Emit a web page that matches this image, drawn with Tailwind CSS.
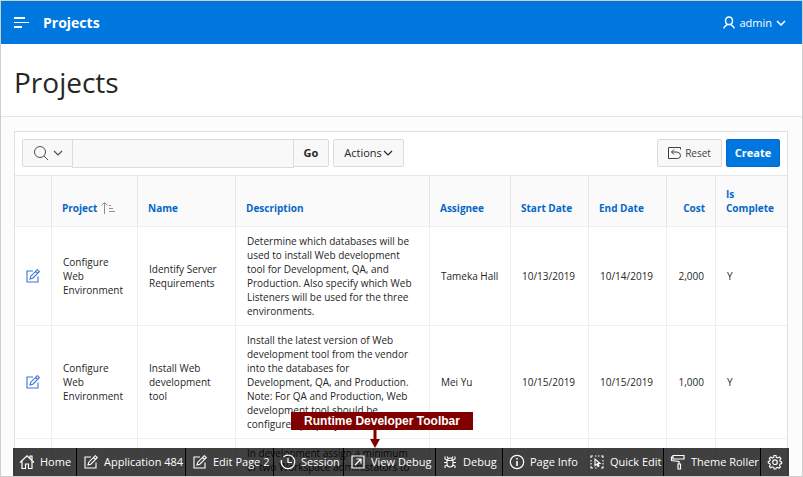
<!DOCTYPE html>
<html lang="en">
<head>
<meta charset="utf-8">
<meta name="viewport" content="width=device-width, initial-scale=1">
<title>Projects</title>
<script src="https://cdn.jsdelivr.net/npm/@tailwindcss/browser@4"></script>
</head>
<body class="relative flex h-screen flex-col overflow-hidden border border-[#cfcfcf] bg-[#fcfcfc] font-['Open_Sans','Noto_Sans',sans-serif] text-[10px] leading-[14px] text-[#262626]">

<!-- Icon symbols -->
<svg class="hidden" aria-hidden="true">
  <symbol id="chev" viewBox="0 0 10 6"><path d="M1 1l4 4 4-4" fill="none" stroke="currentColor" stroke-width="1.2"/></symbol>
  <symbol id="edit" viewBox="1.5 .5 14 14"><path d="M8.500 2.500H2.500v11h11V8M5.500 10.500l.8-2.800 6.500-6.500 2 2-6.500 6.500zM11 3l2 2" fill="none" stroke="currentColor" stroke-width="1.1"/></symbol>
</svg>

<header class="flex h-[43px] shrink-0 items-center bg-[#0076df] px-3 text-white">
  <button aria-label="Main navigation" class="mr-[14px]">
    <svg class="block h-3 w-4" viewBox="0 0 16 12"><path d="M1 1h11M1 10h8" stroke="currentColor" stroke-width="2" fill="none"/><path d="M1 5.500h15" stroke="currentColor"/></svg>
  </button>
  <a href="#" class="text-[14px] leading-5 font-bold">Projects</a>
  <button class="mr-1 ml-auto flex items-center gap-1 text-[11px]">
    <svg class="h-[13px] w-3" viewBox="0 0 12 13"><path d="M6 1a3.500 3.500 0 0 1 3.500 3.700C9.500 7 8 8.500 6 8.500S2.500 7 2.500 4.700A3.500 3.500 0 0 1 6 1zM4.500 8.200C4 9.500 1 9.500 .8 12.500M7.500 8.200C8 9.500 11 9.500 11.200 12.500" fill="none" stroke="currentColor" stroke-width="1.4"/></svg>
    admin
    <svg class="h-[6px] w-[10px]" viewBox="0 0 10 6"><path d="M1 1l4 4 4-4" fill="none" stroke="currentColor" stroke-width="1.600"/></svg>
  </button>
</header>

<div class="flex h-[73px] shrink-0 items-center border-b border-[#e6e6e6] bg-white px-[13px] pt-[3px]">
  <h1 class="text-[28px] leading-9">Projects</h1>
</div>

<main class="mr-[14px] ml-[13px] mt-[14px] shrink-0 border border-[#e0e0e0] bg-white">
  <div class="flex items-start p-[7px]">
    <button aria-label="Select columns to search" class="flex h-7 w-[51px] items-center justify-center gap-1 rounded-l-xs border border-[#dcdcdc] bg-[#f8f8f8] text-[#505050]">
      <svg class="h-4 w-4" viewBox="0 0 16 16"><circle cx="7" cy="7" r="5.500" fill="none" stroke="currentColor"/><path d="M11 11l4 4" stroke="currentColor"/></svg>
      <svg class="h-[6px] w-[10px]"><use href="#chev"/></svg>
    </button>
    <input type="text" aria-label="Search report" class="-ml-px h-[29px] w-[222px] border border-[#dcdcdc] bg-[#f9f9f9] px-2">
    <button class="-ml-px h-7 w-9 rounded-r-xs border border-[#dcdcdc] bg-[#f8f8f8] text-[11px] font-bold">Go</button>
    <button class="ml-1 flex h-7 w-[71px] items-center justify-center gap-px rounded-xs border border-[#dcdcdc] bg-[#f8f8f8] text-[11px]">Actions <svg class="h-[6px] w-[10px]"><use href="#chev"/></svg></button>
    <button class="ml-auto flex h-7 w-[65px] items-center justify-center gap-1 rounded-xs border border-[#dcdcdc] bg-[#f8f8f8] text-[10px] text-[#404040]">
      <svg class="h-3 w-[13px]" viewBox="0 0 13 12"><path d="M12.500 2.500V.5H.5v11h9Q12.500 11.500 12.500 8.500T9 5H3.500M6 2.500L3.500 5 6 7.500" fill="none" stroke="currentColor"/></svg>
      Reset</button>
    <button class="ml-1 h-7 w-[54px] rounded-xs border border-[#006acb] bg-[#0076df] text-[11px] font-bold text-white">Create</button>
  </div>

  <table class="w-full table-fixed border-separate border-spacing-0 text-left [&_td]:border-r [&_td]:border-b [&_td]:border-[#efefef] [&_td]:px-[11px] [&_td]:py-[7px] [&_td:last-child]:border-r-0 [&_td:nth-child(4)]:pr-4 [&_th]:border-t [&_th]:border-r [&_th]:border-b [&_th]:border-[#e6e6e6] [&_th]:border-b-[#efefef] [&_th]:bg-[#fafafa] [&_th]:px-[10px] [&_th]:py-[11px] [&_th]:align-bottom [&_th]:font-bold [&_th:last-child]:border-r-0">
    <colgroup>
      <col class="w-[37px]"><col class="w-[86px]"><col class="w-[98px]"><col><col class="w-[81px]"><col class="w-[78px]"><col class="w-[78px]"><col class="w-[49px]"><col class="w-[71px]">
    </colgroup>
    <thead class="text-[#0568c8]">
      <tr>
        <th aria-label="Edit"></th>
        <th><a href="#" class="flex items-center gap-1">Project
          <svg class="h-3 w-[14px] text-[#909090]" viewBox="0 0 14 12"><path d="M3.500 12V1M.5 3.500l3-3 3 3M8 3.500h2M8 6.500h4M8 9.500h6" fill="none" stroke="currentColor"/></svg></a></th>
        <th><a href="#">Name</a></th>
        <th><a href="#">Description</a></th>
        <th><a href="#">Assignee</a></th>
        <th><a href="#">Start Date</a></th>
        <th><a href="#">End Date</a></th>
        <th class="text-right"><a href="#">Cost</a></th>
        <th><a href="#">Is Complete</a></th>
      </tr>
    </thead>
    <tbody>
      <tr>
        <td><a href="#" aria-label="Edit" class="block text-[#3b74d8]"><svg class="h-[14px] w-[14px]"><use href="#edit"/></svg></a></td>
        <td>Configure Web Environment</td>
        <td>Identify Server Requirements</td>
        <td>Determine which databases will be used to install Web development tool for Development, QA, and Production. Also specify which Web Listeners will be used for the three environments.</td>
        <td>Tameka Hall</td><td>10/13/2019</td><td>10/14/2019</td><td class="text-right">2,000</td><td>Y</td>
      </tr>
      <tr>
        <td><a href="#" aria-label="Edit" class="block text-[#3b74d8]"><svg class="h-[14px] w-[14px]"><use href="#edit"/></svg></a></td>
        <td>Configure Web Environment</td>
        <td>Install Web development tool</td>
        <td>Install the latest version of Web development tool from the vendor into the databases for Development, QA, and Production. Note: For QA and Production, Web development tool should be configured properly.</td>
        <td>Mei Yu</td><td>10/15/2019</td><td>10/15/2019</td><td class="text-right">1,000</td><td>Y</td>
      </tr>
      <tr>
        <td></td><td></td><td></td>
        <td>In development assign a minimum of two Workspace administators to</td>
        <td></td><td></td><td></td><td></td><td></td>
      </tr>
    </tbody>
  </table>
</main>

<!-- Developer toolbar, pinned over the report -->
<nav aria-label="Runtime Developer Toolbar" class="absolute right-[13px] bottom-0 left-3 grid h-7 grid-cols-[64fr_109fr_88fr_70fr_92fr_67fr_80fr_81fr_97fr_28fr] bg-black/75 text-[11px] whitespace-nowrap text-white [&>button]:flex [&>button]:items-center [&>button]:gap-[6px] [&>button]:pl-[7px] [&_svg]:size-[14px] [&_svg]:shrink-0 [&_svg]:overflow-visible">
  <button class="border-r border-black"><svg viewBox="0 0 14 14"><path d="M0 7.500L7 .8l7 6.700M2 6v7.500h3.500V9h3v4.500H12V6M10 3V1h2v4" fill="none" stroke="currentColor" stroke-width="1.200"/></svg>Home</button>
  <button class="border-r border-black"><svg><use href="#edit"/></svg>Application 484</button>
  <button class="border-r border-black"><svg><use href="#edit"/></svg>Edit Page 2</button>
  <button class="border-r border-black"><svg viewBox="0 0 14 14"><path d="M2.500 1.800A6.800 6.800 0 1 1 .5 5M.5 9V5.500M7 3v4.500h4" fill="none" stroke="currentColor" stroke-width="1.200"/></svg>Session</button>
  <button class="border-r border-black"><svg viewBox="0 0 14 14"><path d="M1 1h12v12H1zM4 10l6-6M5.500 4H10v4.500" fill="none" stroke="currentColor" stroke-width="1.200"/></svg>View Debug</button>
  <button class="border-r border-black"><svg viewBox="0 0 14 14"><path d="M4 5.500h6V9a3 3 0 0 1-6 0zM4.500 5.500a2.500 2.500 0 0 1 5 0M1 7.500h3M10 7.500h3M4 5L2 4V1.500M10 5l2-1V1.500M4 10l-2 1v2M10 10l2 1v2M5 3L4 1.500M9 3l1-1.500" fill="none" stroke="currentColor" stroke-width="1.100"/></svg>Debug</button>
  <button><svg viewBox="0 0 14 14"><circle cx="7" cy="7" r="6.700" fill="none" stroke="currentColor" stroke-width="1.200"/><path d="M7 3v1.600M7 6v5" stroke="currentColor" stroke-width="1.600"/></svg>Page Info</button>
  <button class="border-r border-black"><svg viewBox="0 0 14 14"><path d="M1 3V1h2M5 1h1.500M8 1h1.500M11 1h2v2M13 5v1.500M13 8v1.500M13 11v2h-2M1 5v1.500M1 8v1.500M1 11v2h2M5 13h1.500M5 4v6.500l1.800-1.500 1.200 2.500 1-.5-1.100-2.500H10z" fill="none" stroke="currentColor" stroke-width="1.100"/></svg>Quick Edit</button>
  <button class="border-r border-black"><svg viewBox="0 0 14 14"><path d="M2 .5h11V4H2zM2 2H.5v3.500L8 6.500V9M7 9h2.500v5H7z" fill="none" stroke="currentColor" stroke-width="1.200"/></svg>Theme Roller</button>
  <button aria-label="Options"><svg viewBox="0 0 14 14"><path d="M5.700 2.300L6 .5h2l.3 1.800 1.500.7L11.500 2l1.400 1.600-1.100 1.600.4 1.300 1.500.5v1.500l-1.600.4-.6 1.400.9 1.500-1.400 1.400-1.600-.9-1.200.5L7.900 14H6.100l-.4-1.700-1.300-.5-1.600.9-1.400-1.400.9-1.500-.5-1.400L.3 8V6.500l1.500-.4.5-1.300L1.300 3.500 2.700 2l1.600 1z" fill="none" stroke="currentColor" stroke-width="1.100"/><circle cx="7" cy="7.200" r="2.300" fill="none" stroke="currentColor" stroke-width="1.200"/></svg></button>
</nav>

<!-- Callout pointing at the toolbar -->
<div class="absolute bottom-7 left-[290px] flex w-[182px] flex-col items-center font-['Liberation_Sans',Arial,sans-serif]">
  <div class="h-[18px] w-full bg-[#800000] text-center text-[12px] leading-[18px] font-bold text-white">Runtime Developer Toolbar</div>
  <svg class="mr-[14px] h-[18px] w-[10px]" viewBox="0 0 10 18"><path d="M3.500 0h3v9H10L5 18 0 9h3.500z" fill="#800000"/></svg>
</div>
</body>
</html>
